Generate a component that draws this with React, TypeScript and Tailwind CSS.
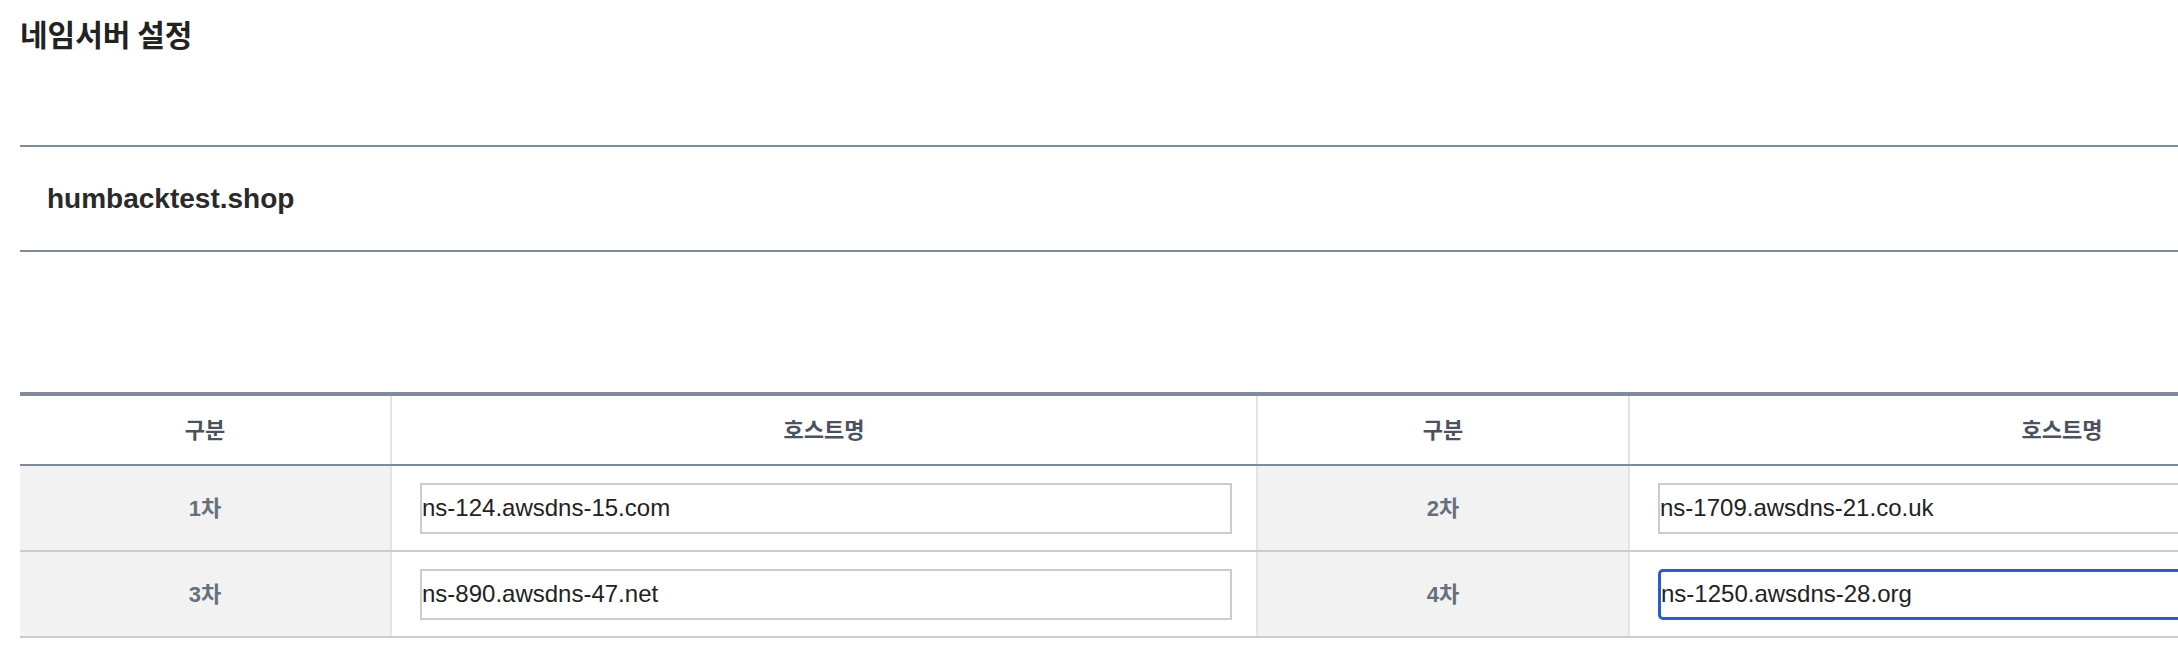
import React from "react";

interface NsEntry {
  label: string;
  host: string;
  focused?: boolean;
}

const rows: NsEntry[][] = [
  [
    { label: "1차", host: "ns-124.awsdns-15.com" },
    { label: "2차", host: "ns-1709.awsdns-21.co.uk" },
  ],
  [
    { label: "3차", host: "ns-890.awsdns-47.net" },
    { label: "4차", host: "ns-1250.awsdns-28.org", focused: true },
  ],
];

const labelFont = {
  fontFamily: '"Liberation Sans", "Noto Sans CJK KR", sans-serif',
};

function HostInput({ entry }: { entry: NsEntry }) {
  return (
    <input
      type="text"
      defaultValue={entry.host}
      readOnly
      className={
        entry.focused
          ? "h-[51px] w-full rounded-[5px] border-[3px] border-[#2b5bcc] px-0 text-[24px] text-[#222] outline-none"
          : "h-[51px] w-full border-2 border-[#cccccc] px-0 text-[24px] text-[#222] outline-none"
      }
      style={{ fontFamily: '"Liberation Sans", Arial, sans-serif' }}
    />
  );
}

export default function App() {
  return (
    <main className="min-h-screen w-full overflow-hidden bg-white pl-[20px]">
      <h1
        className="pt-[18px] text-[30px] font-bold leading-[31px] text-[#222]"
        style={{ fontFamily: '"Noto Sans CJK KR", sans-serif' }}
      >
        네임서버 설정
      </h1>

      <div className="mt-[96px] flex h-[107px] items-center border-y-2 border-[#7f8b9a] pl-[27px]">
        <span
          className="text-[28px] font-bold leading-[28px] text-[#2a2a2a]"
          style={{ fontFamily: '"Liberation Sans", Arial, sans-serif' }}
        >
          humbacktest.shop
        </span>
      </div>

      <div className="mt-[140px] border-t-4 border-[#7f8b9a]" style={labelFont}>
        <div className="flex h-[70px] border-b-2 border-[#7f8b9a] text-[22px] font-bold text-[#4a525e]">
          <div className="flex w-[370px] shrink-0 items-center justify-center">구분</div>
          <div className="flex w-[866px] shrink-0 items-center justify-center border-l-2 border-[#e4e4e4]">
            호스트명
          </div>
          <div className="flex w-[372px] shrink-0 items-center justify-center border-l-2 border-[#e4e4e4]">
            구분
          </div>
          <div className="flex w-[866px] shrink-0 items-center justify-center border-l-2 border-[#e4e4e4]">
            호스트명
          </div>
        </div>

        {rows.map((row, i) => (
          <div key={i} className="flex h-[86px] border-b-2 border-[#cccccc]">
            <div className="flex w-[370px] shrink-0 items-center justify-center bg-[#f2f2f2] text-[22px] font-bold text-[#65707d]">
              {row[0].label}
            </div>
            <div className="flex w-[866px] shrink-0 items-center border-l-2 border-[#e4e4e4] pl-[28px] pr-[24px]">
              <HostInput entry={row[0]} />
            </div>
            <div className="flex w-[372px] shrink-0 items-center justify-center border-l-2 border-[#e4e4e4] bg-[#f2f2f2] text-[22px] font-bold text-[#65707d]">
              {row[1].label}
            </div>
            <div className="flex w-[866px] shrink-0 items-center border-l-2 border-[#e4e4e4] pl-[28px] pr-[24px]">
              <HostInput entry={row[1]} />
            </div>
          </div>
        ))}
      </div>
    </main>
  );
}
